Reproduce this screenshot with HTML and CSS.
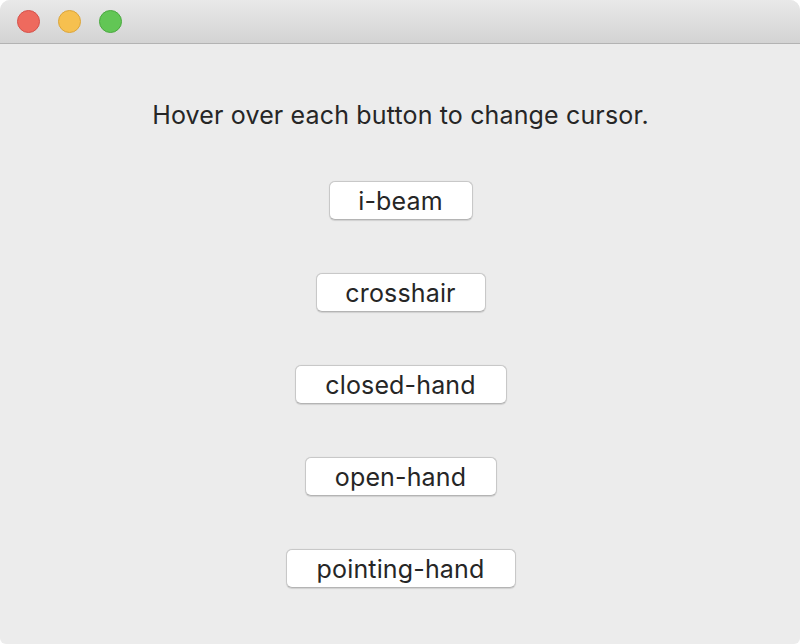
FILE: index.html
```html
<!DOCTYPE html>
<html>
<head>
<meta charset="utf-8">
<link rel="stylesheet" href="styles.css">
</head>
<body>
<div class="window">
  <div class="titlebar">
    <span class="light red"></span>
    <span class="light yellow"></span>
    <span class="light green"></span>
  </div>
  <div class="content">
    <p class="msg">Hover over each button to change cursor.</p>
    <div class="buttons">
      <button class="btn ibeam">i-beam</button>
      <button class="btn cross">crosshair</button>
      <button class="btn closed">closed-hand</button>
      <button class="btn open">open-hand</button>
      <button class="btn point">pointing-hand</button>
    </div>
  </div>
</div>
</body>
</html>
```
FILE: styles.css
```css
html, body {
  margin: 0;
  padding: 0;
  background: #ffffff;
}
.window {
  width: 800px;
  height: 644px;
  background: #ececec;
  border-radius: 10px 10px 6px 6px;
  overflow: hidden;
  font-family: Inter, "Noto Sans", sans-serif;
  color: #262626;
  display: flex;
  flex-direction: column;
}
.titlebar {
  height: 43px;
  border-bottom: 1px solid #b3b3b3;
  background: linear-gradient(#e9e9e9, #d3d3d3);
  display: flex;
  align-items: center;
  gap: 18px;
  padding-left: 17px;
  box-sizing: content-box;
}
.light {
  width: 23px;
  height: 23px;
  border-radius: 50%;
  box-sizing: border-box;
}
.red { background: #ee6a5e; border: 1px solid #d5514a; }
.yellow { background: #f6c04f; border: 1px solid #dba43a; }
.green { background: #62c655; border: 1px solid #4aa93f; }
.content {
  display: flex;
  flex-direction: column;
  align-items: center;
  padding-left: 1px;
}
.msg {
  margin: 56px 0 0 0;
  font-size: 25px;
  line-height: 30px;
  letter-spacing: 0.15px;
}
.buttons {
  display: flex;
  flex-direction: column;
  align-items: center;
  gap: 53px;
  margin-top: 51px;
}
.btn {
  height: 39px;
  border: 1px solid #c8c8c8;
  border-bottom-color: #b4b4b4;
  border-radius: 6px;
  background: #ffffff;
  box-shadow: 0 0.5px 1px rgba(0,0,0,0.12);
  font-family: Inter, "Noto Sans", sans-serif;
  font-size: 25px;
  letter-spacing: 0.15px;
  color: #262626;
  padding: 0;
}
.ibeam { width: 144px; }
.cross { width: 170px; }
.closed { width: 212px; }
.open { width: 192px; }
.point { width: 230px; }
```
